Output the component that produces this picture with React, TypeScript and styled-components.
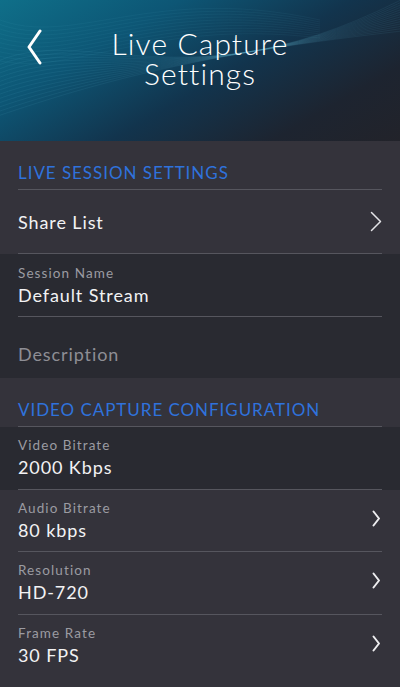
import React from "react";
import styled, { createGlobalStyle } from "styled-components";

const GlobalStyle = createGlobalStyle`
  html, body {
    margin: 0;
    padding: 0;
    background: #2a2b32;
  }
  * {
    box-sizing: border-box;
  }
  body {
    font-family: "Lato", "Noto Sans", sans-serif;
    -webkit-font-smoothing: antialiased;
  }
`;

type Item = {
  label?: string;
  value: string;
  placeholder?: boolean;
  chevron?: "thin" | "bold";
  dark?: boolean;
  last?: boolean;
  height: number;
};

const sessionItems: Item[] = [
  { value: "Share List", chevron: "thin", height: 64 },
  { label: "Session Name", value: "Default Stream", dark: true, height: 63 },
  {
    value: "Description",
    placeholder: true,
    dark: true,
    last: true,
    height: 61,
  },
];

const videoItems: Item[] = [
  { label: "Video Bitrate", value: "2000 Kbps", dark: true, height: 62.5 },
  { label: "Audio Bitrate", value: "80 kbps", chevron: "bold", height: 62.5 },
  { label: "Resolution", value: "HD-720", chevron: "bold", height: 62.5 },
  {
    label: "Frame Rate",
    value: "30 FPS",
    chevron: "bold",
    last: true,
    height: 62.5,
  },
];

const Chevron = ({ kind }: { kind: "thin" | "bold" }) =>
  kind === "thin" ? (
    <svg width="12" height="21" viewBox="0 0 12 21" fill="none">
      <path
        d="M1.5 1.5 L10.5 10.5 L1.5 19.5"
        stroke="#e4e4e8"
        strokeWidth="1.5"
        strokeLinecap="round"
        strokeLinejoin="round"
      />
    </svg>
  ) : (
    <BoldChevron width="9" height="17" viewBox="0 0 9 17" fill="none">
      <path
        d="M1.5 1.5 L7 8.5 L1.5 15.5"
        stroke="#eeeef0"
        strokeWidth="2"
        strokeLinecap="round"
        strokeLinejoin="round"
      />
    </BoldChevron>
  );

const BackIcon = () => (
  <svg width="18" height="36" viewBox="0 0 18 36" fill="none">
    <path
      d="M15 2 L4 18 L15 34"
      stroke="#ffffff"
      strokeWidth="3"
      strokeLinecap="round"
      strokeLinejoin="round"
    />
  </svg>
);

const Waves = () => (
  <WaveSvg viewBox="0 0 400 141" preserveAspectRatio="none">
    {Array.from({ length: 14 }).map((_, i) => (
      <path
        key={i}
        d={`M-20 ${70 + i * 4} C 80 ${10 + i * 6}, 180 ${120 - i * 5}, 420 ${-10 + i * 3}`}
        stroke="rgba(120, 210, 230, 0.10)"
        strokeWidth="0.8"
        fill="none"
      />
    ))}
    {Array.from({ length: 10 }).map((_, i) => (
      <path
        key={`b${i}`}
        d={`M-20 ${10 + i * 5} C 60 ${60 + i * 3}, 140 ${-20 + i * 4}, 320 ${20 + i * 2}`}
        stroke="rgba(120, 210, 230, 0.08)"
        strokeWidth="0.7"
        fill="none"
      />
    ))}
  </WaveSvg>
);

const SettingRow = ({ item }: { item: Item }) => (
  <Row $dark={item.dark}>
    <RowInner $last={item.last} $height={item.height}>
      <Texts $placeholder={item.placeholder}>
        {item.label && <Label>{item.label}</Label>}
        <Value $placeholder={item.placeholder}>{item.value}</Value>
      </Texts>
      {item.chevron && <Chevron kind={item.chevron} />}
    </RowInner>
  </Row>
);

export default function App() {
  return (
    <Screen>
      <GlobalStyle />
      <Header>
        <Waves />
        <BackButton>
          <BackIcon />
        </BackButton>
        <Title>
          Live Capture
          <br />
          Settings
        </Title>
      </Header>

      <SectionHeader>
        <SectionTitle>Live Session Settings</SectionTitle>
      </SectionHeader>
      {sessionItems.map((item) => (
        <SettingRow key={item.value} item={item} />
      ))}

      <SectionHeader>
        <SectionTitle>Video Capture Configuration</SectionTitle>
      </SectionHeader>
      {videoItems.map((item) => (
        <SettingRow key={item.value} item={item} />
      ))}
    </Screen>
  );
}

const Screen = styled.div`
  width: 400px;
  min-height: 687px;
  background: #34333b;
  display: flex;
  flex-direction: column;
`;

const Header = styled.header`
  position: relative;
  height: 141px;
  flex-shrink: 0;
  overflow: hidden;
  display: flex;
  justify-content: center;
  padding-top: 28px;
  background: linear-gradient(
    150deg,
    #0f6f89 0%,
    #0d5675 28%,
    #12344d 55%,
    #1d2430 80%,
    #22232a 100%
  );
`;

const WaveSvg = styled.svg`
  position: absolute;
  inset: 0;
  width: 100%;
  height: 100%;
`;

const BackButton = styled.button`
  position: absolute;
  left: 25px;
  top: 29px;
  appearance: none;
  border: 0;
  background: transparent;
  padding: 0;
  cursor: pointer;
  display: flex;
`;

const Title = styled.h1`
  position: relative;
  margin: 0;
  font-family: "Lato", "Noto Sans", sans-serif;
  font-weight: 300;
  font-size: 30px;
  line-height: 30px;
  color: #ffffff;
  text-align: center;
  letter-spacing: 1.1px;
`;

const SectionHeader = styled.div`
  padding: 0 18px;
  background: #34333b;
  flex-shrink: 0;
`;

const SectionTitle = styled.div`
  height: 49px;
  display: flex;
  align-items: center;
  padding-top: 14px;
  border-bottom: 1.5px solid #56565e;
  color: #2f72dc;
  font-size: 17px;
  text-transform: uppercase;
  letter-spacing: 0.95px;
`;

const Row = styled.div<{ $dark?: boolean }>`
  padding: 0 18px;
  flex-shrink: 0;
  background: ${({ $dark }) => ($dark ? "#292a31" : "#34333b")};
`;

const RowInner = styled.div<{ $last?: boolean; $height: number }>`
  height: ${({ $height }) => $height}px;
  display: flex;
  align-items: center;
  justify-content: space-between;
  border-bottom: ${({ $last }) => ($last ? "none" : "1.5px solid #56565e")};
`;

const Texts = styled.div<{ $placeholder?: boolean }>`
  display: flex;
  flex-direction: column;
  gap: 3px;
  padding-top: ${({ $placeholder }) => ($placeholder ? "12px" : "0")};
`;

const Label = styled.span`
  font-size: 13.5px;
  line-height: 16px;
  color: #9b9ba2;
  letter-spacing: 1.1px;
`;

const Value = styled.span<{ $placeholder?: boolean }>`
  font-size: 18px;
  line-height: 22px;
  color: ${({ $placeholder }) => ($placeholder ? "#8e8e95" : "#f2f2f4")};
  letter-spacing: 0.9px;
`;

const BoldChevron = styled.svg`
  margin-right: 1px;
  margin-top: -4px;
`;
